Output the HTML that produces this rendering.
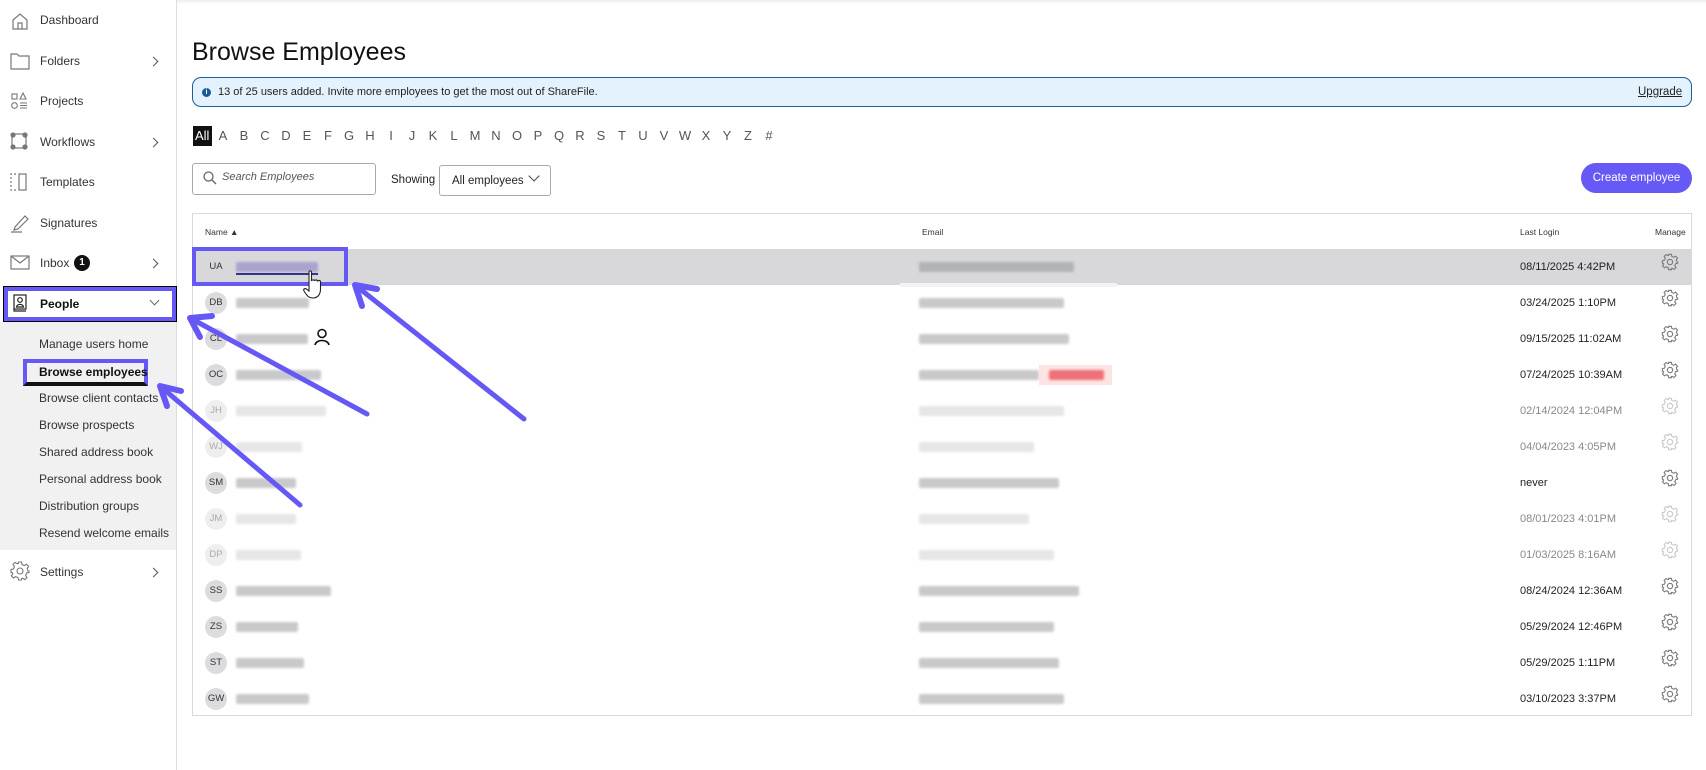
<!DOCTYPE html>
<html><head><meta charset="utf-8">
<style>
*{box-sizing:border-box;margin:0;padding:0}
body{width:1706px;height:770px;position:relative;background:#fff;font-family:"Liberation Sans",sans-serif;color:#222;overflow:hidden}
.a{position:absolute}
.side{left:0;top:0;width:177px;height:770px;border-right:1px solid #ddd;background:#fff}
.ni{position:absolute;left:40px;font-size:12px;color:#333}
.ic{position:absolute;left:10px}
.chev{position:absolute;left:150px;width:7px;height:7px;border-right:1.5px solid #555;border-top:1.5px solid #555;transform:rotate(45deg)}
.sub{position:absolute;left:39px;font-size:12px;color:#333}
.ltr{position:absolute;top:128px;font-size:13px;color:#555;width:14px;text-align:center}
.row{position:absolute;left:193px;width:1498px;height:36px}
.av{position:absolute;left:12px;top:7px;width:22px;height:22px;border-radius:50%;background:#dcdcde;font-size:9.5px;color:#333;text-align:center;line-height:22px}
.bl{position:absolute;height:10px;top:13px;background:#c9c9cc;filter:blur(1.2px);border-radius:2px}
.dt{position:absolute;left:1327px;top:12px;font-size:11px;color:#222}
.g{position:absolute;left:1468px;top:4px}
.fade .av{color:#aaa;background:#eee}
.fade .bl{background:#e6e6e8}
.fade .dt{color:#888}
.fade .g{opacity:.4}
</style></head><body>
<div class="a" style="left:0;top:0;width:1706px;height:4px;background:linear-gradient(#eee,#fff)"></div>
<div class="a side">
 <svg class="ic" style="top:11px" width="20" height="20" viewBox="0 0 20 20" fill="none" stroke="#777" stroke-width="1.2"><path d="M3 9 L10 3 L17 9 V18 H3 Z M8 18 V12 H12 V18"/></svg>
 <div class="ni" style="top:13px">Dashboard</div>
 <svg class="ic" style="top:52px" width="20" height="18" viewBox="0 0 20 18" fill="none" stroke="#777" stroke-width="1.2"><path d="M1 2 H7 L9 4 H19 V17 H1 Z"/></svg>
 <div class="ni" style="top:54px">Folders</div><div class="chev" style="top:58px"></div>
 <svg class="ic" style="top:92px" width="18" height="18" viewBox="0 0 18 18" fill="none" stroke="#777" stroke-width="1.1"><rect x="2" y="2" width="5" height="5"/><path d="M13 1 L16 7 H10 Z"/><circle cx="4.5" cy="13.5" r="2.8"/><path d="M10 11 H17 M10 13.5 H17 M10 16 H17"/></svg>
 <div class="ni" style="top:94px">Projects</div>
 <svg class="ic" style="top:132px" width="18" height="18" viewBox="0 0 18 18" fill="none" stroke="#777" stroke-width="1.2"><rect x="2" y="2" width="14" height="14"/><circle cx="3" cy="3" r="2" fill="#777"/><circle cx="15" cy="3" r="2" fill="#777"/><circle cx="3" cy="15" r="2" fill="#777"/><circle cx="15" cy="15" r="2" fill="#777"/></svg>
 <div class="ni" style="top:135px">Workflows</div><div class="chev" style="top:139px"></div>
 <svg class="ic" style="top:173px" width="18" height="18" viewBox="0 0 18 18" fill="none" stroke="#777" stroke-width="1.2"><path d="M6 1 H1 V17 H6" stroke-dasharray="2 2"/><rect x="9" y="1" width="7" height="16"/></svg>
 <div class="ni" style="top:175px">Templates</div>
 <svg class="ic" style="top:213px" width="20" height="20" viewBox="0 0 20 20" fill="none" stroke="#777" stroke-width="1.2"><path d="M5 14 L15 3 L18 6 L8 16 L4 17 Z M1 19 H12"/></svg>
 <div class="ni" style="top:216px">Signatures</div>
 <svg class="ic" style="top:255px" width="20" height="16" viewBox="0 0 20 16" fill="none" stroke="#777" stroke-width="1.2"><rect x="1" y="1" width="18" height="13"/><path d="M1 1 L10 8 L19 1"/></svg>
 <div class="ni" style="top:256px">Inbox</div>
 <div class="a" style="left:74px;top:255px;width:16px;height:16px;border-radius:50%;background:#111;color:#fff;font-size:10px;font-weight:bold;text-align:center;line-height:16px">1</div>
 <div class="chev" style="top:260px"></div>
 <div class="a" style="left:0;top:322px;width:176px;height:228px;background:#f1f1f1"></div>
 <div class="a" style="left:3px;top:286px;width:174px;height:36px;border:1px solid #000;background:#fff"></div>
 <div class="a" style="left:4px;top:287px;width:172px;height:34px;border:4px solid #6658f4"></div>
 <svg class="a" style="left:13px;top:294px" width="14" height="18" viewBox="0 0 14 18" fill="none" stroke="#222" stroke-width="1.2"><rect x="1" y="1" width="12" height="14"/><circle cx="7" cy="6" r="2.3"/><path d="M3.5 13 C4 9.5 10 9.5 10.5 13 Z M1 15 V17 H13"/></svg>
 <div class="ni" style="top:297px;font-weight:bold;color:#111">People</div>
 <div class="a" style="left:151px;top:297px;width:7px;height:7px;border-right:1.5px solid #666;border-bottom:1.5px solid #666;transform:rotate(45deg)"></div>
 <div class="sub" style="top:337px">Manage users home</div>
 <div class="a" style="left:23px;top:359px;width:125px;height:27px;border:4px solid #6658f4;border-bottom-color:#111"></div>
 <div class="sub" style="top:365px;font-weight:bold;color:#111">Browse employees</div>
 <div class="sub" style="top:391px">Browse client contacts</div>
 <div class="sub" style="top:418px">Browse prospects</div>
 <div class="sub" style="top:445px">Shared address book</div>
 <div class="sub" style="top:472px">Personal address book</div>
 <div class="sub" style="top:499px">Distribution groups</div>
 <div class="sub" style="top:526px">Resend welcome emails</div>
 <svg class="ic" style="top:561px" width="20" height="20" viewBox="0 0 20 20" fill="none" stroke="#777" stroke-width="1.1"><circle cx="10" cy="10" r="3"/><path d="M8.5 1 H11.5 L12 3.5 L14.3 4.6 L16.5 3.2 L18.6 5.4 L17.2 7.6 L18 10 L19 10 L19 11.5 L16.6 12 L15.6 14.4 L17 16.6 L14.8 18.6 L12.6 17.2 L11.5 17.6 L11.5 19 H8.5 L8 16.6 L5.6 15.6 L3.4 17 L1.4 14.8 L2.8 12.6 L2.2 11.5 L1 11.5 V8.5 L3.4 8 L4.4 5.6 L3 3.4 L5.2 1.4 L7.4 2.8 L8.5 2.4 Z"/></svg>
 <div class="ni" style="top:565px">Settings</div><div class="chev" style="top:569px"></div>
</div>

<div class="a" style="left:192px;top:38px;font-size:25px;color:#111">Browse Employees</div>
<div class="a" style="left:192px;top:77px;width:1500px;height:30px;border:1.5px solid #1f5d99;border-radius:9px;background:#e4f2fd"></div>
<div class="a" style="left:202px;top:88px;width:9px;height:9px;border-radius:50%;background:#1b5a99;color:#fff;font-size:7px;text-align:center;line-height:9px;font-weight:bold">i</div>
<div class="a" style="left:218px;top:86px;font-size:11px;color:#222">13 of 25 users added. Invite more employees to get the most out of ShareFile.</div>
<div class="a" style="left:1638px;top:86px;font-size:11.5px;color:#222;text-decoration:underline">Upgrade</div>

<div class="a" style="left:193px;top:126px;width:19px;height:20px;background:#111"></div>
<div class="ltr" style="left:195px;color:#fff;top:128px">All</div>
<div class="ltr" style="left:216px">A</div><div class="ltr" style="left:237px">B</div><div class="ltr" style="left:258px">C</div><div class="ltr" style="left:279px">D</div><div class="ltr" style="left:300px">E</div><div class="ltr" style="left:321px">F</div><div class="ltr" style="left:342px">G</div><div class="ltr" style="left:363px">H</div><div class="ltr" style="left:384px">I</div><div class="ltr" style="left:405px">J</div><div class="ltr" style="left:426px">K</div><div class="ltr" style="left:447px">L</div><div class="ltr" style="left:468px">M</div><div class="ltr" style="left:489px">N</div><div class="ltr" style="left:510px">O</div><div class="ltr" style="left:531px">P</div><div class="ltr" style="left:552px">Q</div><div class="ltr" style="left:573px">R</div><div class="ltr" style="left:594px">S</div><div class="ltr" style="left:615px">T</div><div class="ltr" style="left:636px">U</div><div class="ltr" style="left:657px">V</div><div class="ltr" style="left:678px">W</div><div class="ltr" style="left:699px">X</div><div class="ltr" style="left:720px">Y</div><div class="ltr" style="left:741px">Z</div><div class="ltr" style="left:762px">#</div>

<div class="a" style="left:192px;top:163px;width:184px;height:32px;border:1px solid #aaa;border-radius:3px"></div>
<svg class="a" style="left:203px;top:171px" width="14" height="14" viewBox="0 0 14 14" fill="none" stroke="#666" stroke-width="1.3"><circle cx="5.5" cy="5.5" r="4.5"/><path d="M9 9 L13 13"/></svg>
<div class="a" style="left:222px;top:171px;font-size:11px;font-style:italic;color:#555">Search Employees</div>
<div class="a" style="left:391px;top:174px;font-size:11.5px;color:#222">Showing</div>
<div class="a" style="left:439px;top:165px;width:112px;height:31px;border:1px solid #aaa;border-radius:3px"></div>
<div class="a" style="left:452px;top:175px;font-size:11.5px;color:#222">All employees</div>
<div class="a" style="left:530px;top:172px;width:8px;height:8px;border-right:1.3px solid #444;border-bottom:1.3px solid #444;transform:rotate(45deg)"></div>
<div class="a" style="left:1581px;top:163px;width:111px;height:30px;border-radius:15px;background:#6659f5;color:#fff;font-size:11.5px;text-align:center;line-height:30px">Create employee</div>

<div class="a" style="left:192px;top:213px;width:1500px;height:503px;border:1px solid #d9d9d9"></div>
<div class="a" style="left:205px;top:227px;font-size:8.5px;color:#333">Name ▲</div>
<div class="a" style="left:922px;top:227px;font-size:8.5px;color:#333">Email</div>
<div class="a" style="left:1520px;top:227px;font-size:8.5px;color:#333">Last Login</div>
<div class="a" style="left:1655px;top:227px;font-size:8.5px;color:#333">Manage</div>

<svg width="0" height="0" style="position:absolute"><defs><symbol id="gear" viewBox="0 0 20 20"><g fill="none" stroke="#777" stroke-width="1.2"><circle cx="10" cy="10" r="3"/><path d="M8.5 1.5 H11.5 L12 3.8 L14.2 4.8 L16.2 3.5 L18.3 5.6 L17 7.7 L17.9 9.9 L18.5 10 V11.3 L16.3 11.9 L15.3 14.1 L16.6 16.2 L14.5 18.3 L12.4 17 L11.5 17.3 V18.5 H8.5 L8 16.2 L5.8 15.2 L3.8 16.5 L1.7 14.4 L3 12.3 L2.1 11.3 H1.5 V8.5 L3.8 8 L4.8 5.8 L3.5 3.8 L5.6 1.7 L7.7 3 L8.5 2.7 Z"/></g></symbol></defs></svg>

<div class="row" style="top:249px;background:#d8d8da"><div class="av" style="background:none">UA</div><div class="bl" style="left:43px;width:82px;background:#a9a3cf"></div><div class="a" style="left:43px;top:24px;width:82px;height:1.5px;background:#33338a"></div><div class="bl" style="left:726px;width:155px;background:#b2b3b7"></div><div class="dt">08/11/2025 4:42PM</div><svg class="g" width="18" height="18"><use href="#gear"/></svg></div>
<div class="a" style="left:900px;top:283px;width:217px;height:4px;background:#f3f3f3"></div>
<div class="row" style="top:285px"><div class="av">DB</div><div class="bl" style="left:43px;width:73px"></div><div class="bl" style="left:726px;width:145px"></div><div class="dt">03/24/2025 1:10PM</div><svg class="g" width="18" height="18"><use href="#gear"/></svg></div>
<div class="row" style="top:321px"><div class="av">CL</div><div class="bl" style="left:43px;width:72px"></div>
<svg class="a" style="left:121px;top:7px" width="16" height="18" viewBox="0 0 16 18" fill="none" stroke="#111" stroke-width="1.6"><circle cx="8" cy="5.5" r="4"/><path d="M1 17 C2 11 14 11 15 17"/></svg>
<div class="bl" style="left:726px;width:150px"></div><div class="dt">09/15/2025 11:02AM</div><svg class="g" width="18" height="18"><use href="#gear"/></svg></div>
<div class="row" style="top:357px"><div class="av">OC</div><div class="bl" style="left:43px;width:85px"></div><div class="bl" style="left:726px;width:120px"></div><div class="a" style="left:846px;top:8px;width:73px;height:20px;background:#fde4e4"></div><div class="bl" style="left:856px;width:55px;background:#ee7078"></div><div class="dt">07/24/2025 10:39AM</div><svg class="g" width="18" height="18"><use href="#gear"/></svg></div>
<div class="row fade" style="top:393px"><div class="av">JH</div><div class="bl" style="left:43px;width:90px"></div><div class="bl" style="left:726px;width:145px"></div><div class="dt">02/14/2024 12:04PM</div><svg class="g" width="18" height="18"><use href="#gear"/></svg></div>
<div class="row fade" style="top:429px"><div class="av">WJ</div><div class="bl" style="left:43px;width:66px"></div><div class="bl" style="left:726px;width:115px"></div><div class="dt">04/04/2023 4:05PM</div><svg class="g" width="18" height="18"><use href="#gear"/></svg></div>
<div class="row" style="top:465px"><div class="av">SM</div><div class="bl" style="left:43px;width:60px"></div><div class="bl" style="left:726px;width:140px"></div><div class="dt">never</div><svg class="g" width="18" height="18"><use href="#gear"/></svg></div>
<div class="row fade" style="top:501px"><div class="av">JM</div><div class="bl" style="left:43px;width:60px"></div><div class="bl" style="left:726px;width:110px"></div><div class="dt">08/01/2023 4:01PM</div><svg class="g" width="18" height="18"><use href="#gear"/></svg></div>
<div class="row fade" style="top:537px"><div class="av">DP</div><div class="bl" style="left:43px;width:65px"></div><div class="bl" style="left:726px;width:135px"></div><div class="dt">01/03/2025 8:16AM</div><svg class="g" width="18" height="18"><use href="#gear"/></svg></div>
<div class="row" style="top:573px"><div class="av">SS</div><div class="bl" style="left:43px;width:95px"></div><div class="bl" style="left:726px;width:160px"></div><div class="dt">08/24/2024 12:36AM</div><svg class="g" width="18" height="18"><use href="#gear"/></svg></div>
<div class="row" style="top:609px"><div class="av">ZS</div><div class="bl" style="left:43px;width:62px"></div><div class="bl" style="left:726px;width:135px"></div><div class="dt">05/29/2024 12:46PM</div><svg class="g" width="18" height="18"><use href="#gear"/></svg></div>
<div class="row" style="top:645px"><div class="av">ST</div><div class="bl" style="left:43px;width:68px"></div><div class="bl" style="left:726px;width:140px"></div><div class="dt">05/29/2025 1:11PM</div><svg class="g" width="18" height="18"><use href="#gear"/></svg></div>
<div class="row" style="top:681px"><div class="av">GW</div><div class="bl" style="left:43px;width:73px"></div><div class="bl" style="left:726px;width:145px"></div><div class="dt">03/10/2023 3:37PM</div><svg class="g" width="18" height="18"><use href="#gear"/></svg></div>

<div class="a" style="left:192px;top:247px;width:156px;height:39px;border:4px solid #6658f4"></div>
<svg class="a" style="left:302px;top:270px" width="24" height="30" viewBox="0 0 24 30" fill="#fff" stroke="#222" stroke-width="1.1"><path d="M7 2 C7 0.5 9.5 0.5 9.5 2 V11 C10 9.5 12.5 9.5 12.5 11 C13 9.5 15.5 9.5 15.5 11.5 C16 10 18.5 10 18.5 12 V19 C18.5 24 16 28 11 28 C7 28 5 26 2 21 C1 19 3 17.5 5 19.5 L7 21 Z"/></svg>

<svg class="a" style="left:0;top:0" width="1706" height="770" fill="none" stroke="#6658f4" stroke-width="5" stroke-linecap="round">
<path d="M367 414 L190 318"/><path d="M190 318 L212 316 M190 318 L200 337" stroke-width="6"/>
<path d="M524 419 L355 285"/><path d="M355 285 L377 289 M355 285 L362 306" stroke-width="6"/>
<path d="M300 505 L160 386"/><path d="M160 386 L181 391 M160 386 L167 406" stroke-width="6"/>
</svg>
</body></html>
